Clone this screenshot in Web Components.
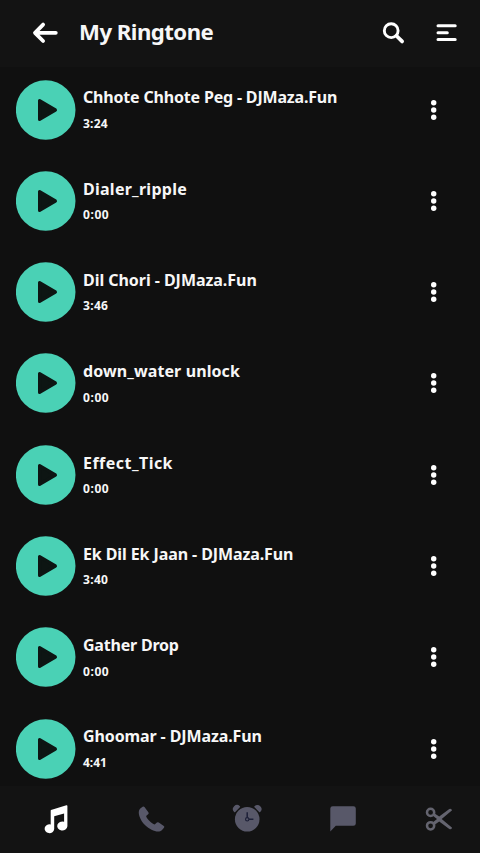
<!DOCTYPE html>
<html lang="en">
<head>
<meta charset="utf-8">
<title>My Ringtone</title>
<style>
html,body{margin:0;height:100%;background:#101010}
body{font-family:"Noto Sans","Open Sans",sans-serif;font-weight:700;color:#f7f7f7;overflow:hidden}
</style>
</head>
<body>
<ringtone-app></ringtone-app>
<script>
/* Text whose tracking is adjusted so that it spans a given width. */
class FitText extends HTMLElement{
  connectedCallback(){
    const root=this.attachShadow({mode:'open'});
    root.innerHTML='<style>:host{display:block;white-space:pre}span{display:inline-block;font-kerning:normal}</style><span></span>';
    const s=root.querySelector('span');
    s.textContent=this.getAttribute('text');
    const w=+this.getAttribute('width');
    const n=s.textContent.length;
    const d=(w-s.getBoundingClientRect().width)/n;
    s.style.letterSpacing=d.toFixed(3)+'px';
  }
}
class PlayButton extends HTMLElement{
  connectedCallback(){
    this.attachShadow({mode:'open'}).innerHTML=`<style>:host{display:block;width:60px;height:60px}svg{display:block}</style>
    <svg width="60" height="60" viewBox="0 0 60 60"><circle cx="29.7" cy="30" r="29.8" fill="#4ad1b5"/><path d="M23.6 20.6v18.8l15.8-9.4z" fill="#0d1513" stroke="#0d1513" stroke-width="3.2" stroke-linejoin="round"/></svg>`;
  }
}
class MoreButton extends HTMLElement{
  connectedCallback(){
    this.attachShadow({mode:'open'}).innerHTML=`<style>:host{display:block;width:10px;height:24px}svg{display:block}</style>
    <svg width="10" height="24" viewBox="0 0 10 24" fill="#fff"><circle cx="4.7" cy="4.8" r="2.7"/><circle cx="4.7" cy="12" r="2.7"/><circle cx="4.7" cy="19.2" r="2.7"/></svg>`;
  }
}
class RingtoneRow extends HTMLElement{
  connectedCallback(){
    const a=k=>this.getAttribute(k);
    this.attachShadow({mode:'open'}).innerHTML=`<style>
    :host{display:flex;align-items:flex-start;height:91.3px;flex:none;padding:0 41.5px 0 15.8px;box-sizing:border-box}
    .info{flex:1;padding:5.9px 0 0 7.2px;min-width:0}
    .name{font-size:16px;line-height:24px}
    .time{font-size:12px;line-height:16px;margin-top:6.5px}
    more-button{margin-top:18px}
    </style><play-button></play-button><div class="info">
    <fit-text class="name" text="${a('name')}" width="${a('w')}"></fit-text>
    <fit-text class="time" text="${a('time')}" width="${a('tw')}"></fit-text></div><more-button></more-button>`;
  }
}
class TopBar extends HTMLElement{
  connectedCallback(){
    this.attachShadow({mode:'open'}).innerHTML=`<style>
    :host{display:flex;align-items:center;height:67px;flex:none;box-sizing:border-box;padding:0 22px 2px 32px;background:#131313}
    svg{display:block;flex:none}
    fit-text{font-size:22.2px;line-height:30px;margin-left:19px;flex:1;margin-top:-1px}
    .menu{margin-left:30px}
    </style>
    <svg width="28" height="24" viewBox="0 0 28 24" fill="none" stroke="#fff" stroke-width="3.8" stroke-linecap="round" stroke-linejoin="round"><path d="M11.1 3.6 3 11.8l8.1 8.2M3.4 11.8h20.4"/></svg>
    <fit-text text="My Ringtone" width="134.3"></fit-text>
    <svg width="24" height="24" viewBox="0 0 24 24" fill="none" stroke="#fff" stroke-width="2.9"><circle cx="9.2" cy="9.7" r="6.9"/><path d="m14.6 15 5.5 5.4" stroke-width="3.8" stroke-linecap="round"/></svg>
    <svg class="menu" width="22" height="24" viewBox="0 0 22 24" fill="none" stroke="#fff" stroke-width="3" stroke-linecap="round"><path d="M2 4.8h17.2M2 11.7h9.3M2 18.5h17.2"/></svg>`;
  }
}
class NavIcon extends HTMLElement{
  static shapes={
    music:'<path fill="#fff" d="M12 7.1 27.4 2.2q1-.3 1 .8v20.3a5.1 4.6 0 1 1-3.3-4.6v-8.3l-9.9 2.8v12.8a4.8 4.4 0 1 1-3.5-4.5V7.9q0-.6.3-.8z"/>',
    phone:'<path fill="#585869" d="M7.6 3.7 5 5.7C2 9 4.8 17 10.2 22.2c5.2 5.1 13.4 8.3 16.6 5L29 24.7q.8-1-.2-1.8l-5-3.4q-1-.7-1.9.1l-2.2 1.8c-2.8-.6-8-5.5-8.6-8.4l2-1.7q1-.8.4-1.9L9.5 4.1Q8.7 3 7.6 3.7z"/>',
    alarm:'<g fill="#585869"><circle cx="16.2" cy="16.2" r="12.3"/><path d="M3.7 8.4A3.2 3.2 0 0 1 8.3 3.8zM28.7 8.4A3.2 3.2 0 0 0 24.1 3.8z" stroke="#585869" stroke-width="1.6" stroke-linejoin="round"/></g><path d="M16.2 9.2v7.1h6.2" fill="none" stroke="#1d2038" stroke-width="1.5"/><circle cx="16.2" cy="16.3" r="1.7" fill="#585869" stroke="#1d2038" stroke-width="1.1"/>',
    chat:'<path fill="#585869" d="M5.8 3.2h20.6q2.4 0 2.4 2.4v14.8q0 2.4-2.4 2.4H8.8L3.3 28.6V5.6q0-2.4 2.5-2.4z"/>',
    cut:'<g fill="none" stroke="#64646f" stroke-width="2.5"><circle cx="7.6" cy="9.4" r="3.6"/><circle cx="7.6" cy="22.8" r="3.6"/></g><path fill="#64646f" d="m11 9.9 5.2 3.5L26.3 6q1.9-1 2.8 1.3L18.7 16l10.4 8.7q-.9 2.3-2.8 1.3l-10.1-7.4-5.2 3.6-1.4-2.6 4.4-3.6-4.4-3.5z"/>'
  };
  connectedCallback(){
    this.attachShadow({mode:'open'}).innerHTML=`<style>:host{display:block;width:32px;height:32px}svg{display:block}</style><svg width="32" height="32" viewBox="0 0 32 32">${NavIcon.shapes[this.getAttribute('kind')]}</svg>`;
  }
}
class TabBar extends HTMLElement{
  connectedCallback(){
    this.attachShadow({mode:'open'}).innerHTML=`<style>:host{display:flex;justify-content:space-between;align-items:center;height:67px;flex:none;box-sizing:border-box;padding:0 25px 1px 39px;background:#131313}</style>
    <nav-icon kind="music"></nav-icon><nav-icon kind="phone"></nav-icon><nav-icon kind="alarm"></nav-icon><nav-icon kind="chat"></nav-icon><nav-icon kind="cut"></nav-icon>`;
  }
}
class RingtoneApp extends HTMLElement{
  connectedCallback(){
    const rows=[
      ['Chhote Chhote Peg - DJMaza.Fun','3:24',254.3,25],
      ['Dialer_ripple','0:00',104,26.3],
      ['Dil Chori - DJMaza.Fun','3:46',173.8,25.3],
      ['down_water unlock','0:00',157,26.3],
      ['Effect_Tick','0:00',90,26.3],
      ['Ek Dil Ek Jaan - DJMaza.Fun','3:40',210.4,25.3],
      ['Gather Drop','0:00',95.8,26.3],
      ['Ghoomar - DJMaza.Fun','4:41',178.9,24]];
    this.attachShadow({mode:'open'}).innerHTML=`<style>
    :host{display:flex;flex-direction:column;height:853px;width:480px;background:#101010}
    main{flex:1;min-height:0;overflow:hidden;display:flex;flex-direction:column;padding-top:12.5px;box-sizing:border-box}
    </style><top-bar></top-bar><main>${rows.map(r=>`<ringtone-row name="${r[0]}" time="${r[1]}" w="${r[2]}" tw="${r[3]}"></ringtone-row>`).join('')}</main><tab-bar></tab-bar>`;
  }
}
customElements.define('fit-text',FitText);
customElements.define('play-button',PlayButton);
customElements.define('more-button',MoreButton);
customElements.define('ringtone-row',RingtoneRow);
customElements.define('top-bar',TopBar);
customElements.define('nav-icon',NavIcon);
customElements.define('tab-bar',TabBar);
customElements.define('ringtone-app',RingtoneApp);
</script>
</body>
</html>
